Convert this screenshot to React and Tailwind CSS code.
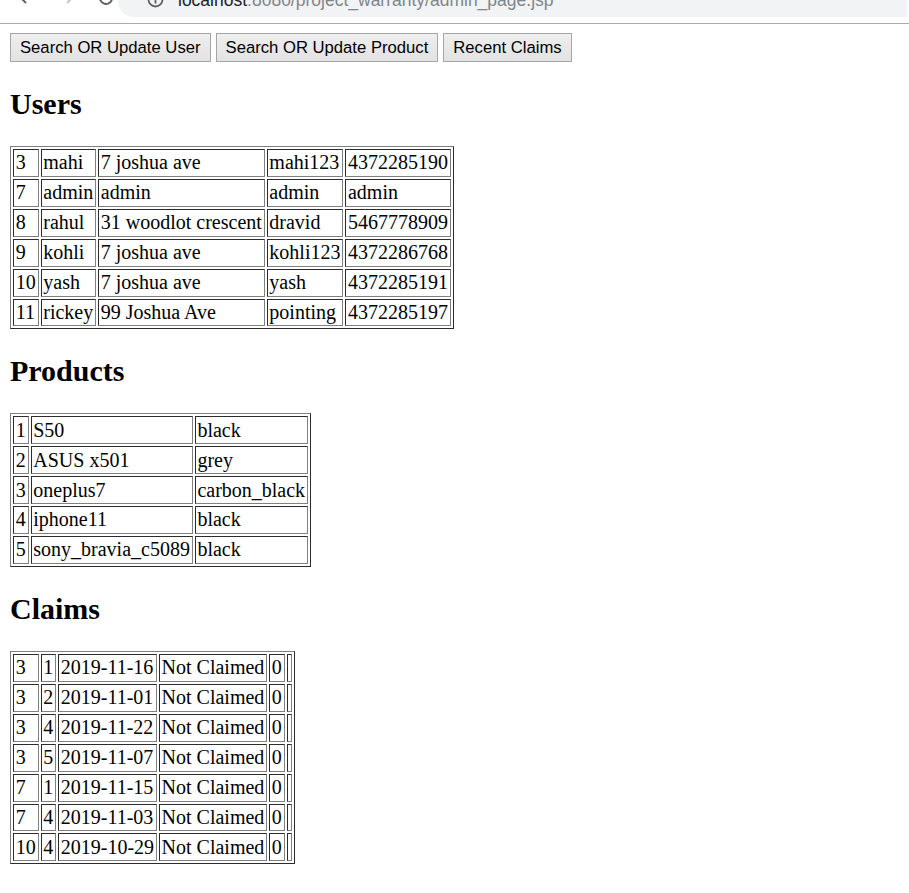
import React from 'react';

const users = [
  ['3', 'mahi', '7 joshua ave', 'mahi123', '4372285190'],
  ['7', 'admin', 'admin', 'admin', 'admin'],
  ['8', 'rahul', '31 woodlot crescent', 'dravid', '5467778909'],
  ['9', 'kohli', '7 joshua ave', 'kohli123', '4372286768'],
  ['10', 'yash', '7 joshua ave', 'yash', '4372285191'],
  ['11', 'rickey', '99 Joshua Ave', 'pointing', '4372285197'],
];

const products = [
  ['1', 'S50', 'black'],
  ['2', 'ASUS x501', 'grey'],
  ['3', 'oneplus7', 'carbon_black'],
  ['4', 'iphone11', 'black'],
  ['5', 'sony_bravia_c5089', 'black'],
];

const claims = [
  ['3', '1', '2019-11-16', 'Not Claimed', '0', ''],
  ['3', '2', '2019-11-01', 'Not Claimed', '0', ''],
  ['3', '4', '2019-11-22', 'Not Claimed', '0', ''],
  ['3', '5', '2019-11-07', 'Not Claimed', '0', ''],
  ['7', '1', '2019-11-15', 'Not Claimed', '0', ''],
  ['7', '4', '2019-11-03', 'Not Claimed', '0', ''],
  ['10', '4', '2019-10-29', 'Not Claimed', '0', ''],
];

// old-school table border="1" look
const DataTable = ({ rows }) => (
  <table className="border-separate border-spacing-[2.5px] border border-[#808080] [border-style:outset] font-['Liberation_Serif',serif] text-[20px] leading-[23.4px] text-black">
    <tbody>
      {rows.map((row, i) => (
        <tr key={i}>
          {row.map((cell, j) => (
            <td
              key={j}
              className="border border-[#808080] [border-style:inset] px-[1.75px] py-[1.25px] text-left align-middle whitespace-nowrap"
            >
              {cell}
            </td>
          ))}
        </tr>
      ))}
    </tbody>
  </table>
);

const Heading = ({ children }) => (
  <h2 className="my-[25px] font-['Liberation_Serif',serif] text-[30px] font-bold leading-[34px] text-black">
    {children}
  </h2>
);

const NavButton = ({ children }) => (
  <button className="h-[29px] border border-[#a6a6a6] bg-[#e6e6e6] bg-gradient-to-b from-[#efefef] to-[#e2e2e2] px-[9px] font-['Liberation_Sans',Arial,sans-serif] text-[16.67px] leading-[20px] text-black">
    {children}
  </button>
);

const BrowserBar = () => (
  <div className="relative h-[24px] overflow-hidden border-b border-[#ababab] bg-white">
    {/* back */}
    <svg className="absolute left-[17px] top-[-12px]" width="18" height="18" viewBox="0 0 18 18" fill="none" stroke="#5f6368" strokeWidth="2">
      <path d="M16 9H3M9 3L3 9l6 6" />
    </svg>
    {/* forward */}
    <svg className="absolute left-[58px] top-[-12px]" width="18" height="18" viewBox="0 0 18 18" fill="none" stroke="#c4c7ca" strokeWidth="2">
      <path d="M2 9h13M9 3l6 6-6 6" />
    </svg>
    {/* reload */}
    <svg className="absolute left-[97px] top-[-11px]" width="18" height="18" viewBox="0 0 18 18" fill="none" stroke="#5f6368" strokeWidth="2">
      <path d="M15 9a6 6 0 1 1-2-4.5" />
    </svg>
    <div className="absolute left-[118px] right-[2px] top-0 h-[17px] rounded-bl-[16px] bg-[#f1f3f4]">
      <svg className="absolute left-[29px] top-[-9px]" width="17" height="17" viewBox="0 0 17 17" fill="none" stroke="#5f6368" strokeWidth="1.8">
        <circle cx="8.5" cy="8.5" r="7" />
        <path d="M8.5 7.5v5" />
      </svg>
      <div className="absolute left-[60px] top-[-10px] whitespace-nowrap font-['Liberation_Sans',Arial,sans-serif] text-[17.5px] leading-[20px]">
        <span className="text-[#202124]">localhost</span>
        <span className="text-[#80868b]">:8080/project_warranty/admin_page.jsp</span>
      </div>
    </div>
  </div>
);

export default function App() {
  return (
    <div className="min-h-screen bg-white">
      <BrowserBar />
      <div className="px-[10px] pt-[9px] pb-[10px]">
        <div className="flex gap-[5px]">
          <NavButton>Search OR Update User</NavButton>
          <NavButton>Search OR Update Product</NavButton>
          <NavButton>Recent Claims</NavButton>
        </div>

        <Heading>Users</Heading>
        <DataTable rows={users} />

        <Heading>Products</Heading>
        <DataTable rows={products} />

        <Heading>Claims</Heading>
        <DataTable rows={claims} />
      </div>
    </div>
  );
}
